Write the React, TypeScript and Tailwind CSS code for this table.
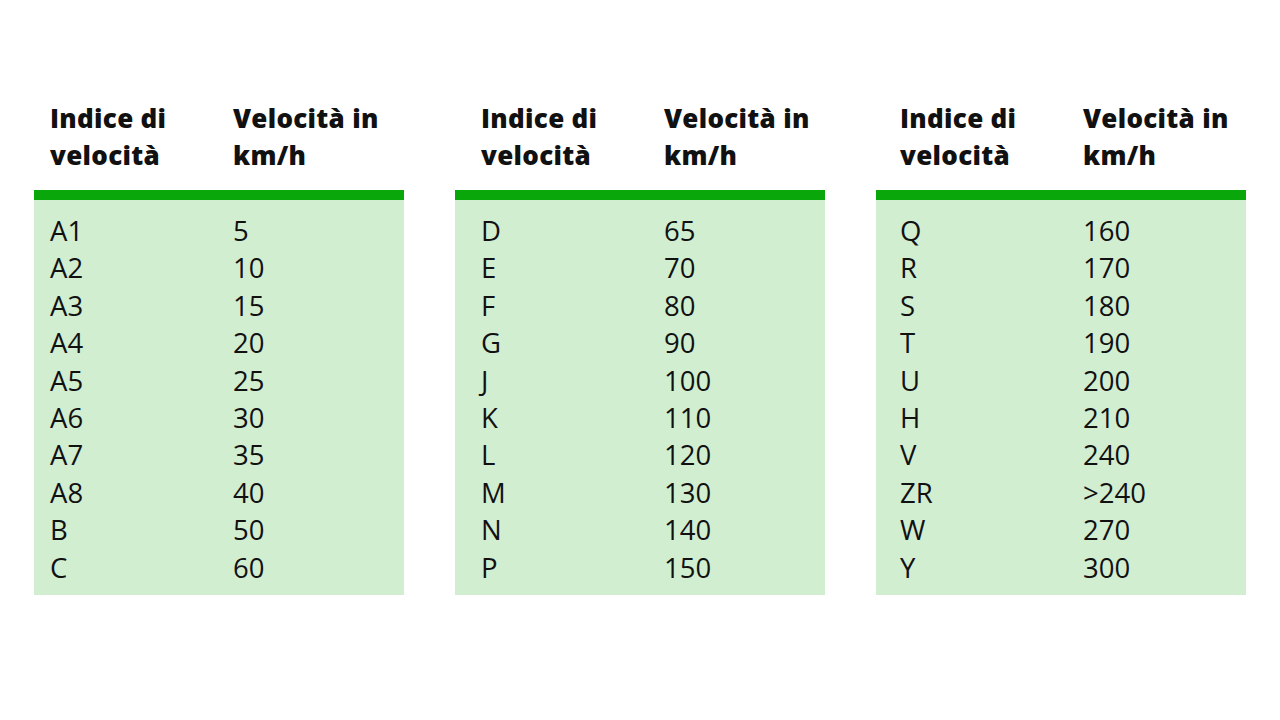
const tables = [
  {
    pad: "pl-[16px]",
    col: "w-[183px]",
    rows: [
      ["A1", "5"], ["A2", "10"], ["A3", "15"], ["A4", "20"], ["A5", "25"],
      ["A6", "30"], ["A7", "35"], ["A8", "40"], ["B", "50"], ["C", "60"],
    ],
  },
  {
    pad: "pl-[26px]",
    col: "w-[183px]",
    rows: [
      ["D", "65"], ["E", "70"], ["F", "80"], ["G", "90"], ["J", "100"],
      ["K", "110"], ["L", "120"], ["M", "130"], ["N", "140"], ["P", "150"],
    ],
  },
  {
    pad: "pl-[24px]",
    col: "w-[183px]",
    rows: [
      ["Q", "160"], ["R", "170"], ["S", "180"], ["T", "190"], ["U", "200"],
      ["H", "210"], ["V", "240"], ["ZR", ">240"], ["W", "270"], ["Y", "300"],
    ],
  },
];

function SpeedTable({ pad, col, rows }: { pad: string; col: string; rows: string[][] }) {
  return (
    <div className="w-[370px] flex flex-col">
      <div className={`flex ${pad} h-[90px] font-extrabold text-[26px] leading-[37px] tracking-[0.3px]`}>
        <div className={col}>
          Indice di
          <br />
          velocità
        </div>
        <div>
          Velocità in
          <br />
          km/h
        </div>
      </div>
      <div className="h-[10px] bg-[#0aa70a]" />
      <div className={`bg-[#d1eed1] ${pad} pt-[12px] pb-[9px] text-[27.5px] leading-[37.4px]`}>
        {rows.map(([idx, speed]) => (
          <div key={idx} className="flex">
            <div className={col}>{idx}</div>
            <div>{speed}</div>
          </div>
        ))}
      </div>
    </div>
  );
}

export default function App() {
  return (
    <div
      className="w-[1280px] h-[720px] bg-white text-[#111] pt-[100px] pl-[34px] flex gap-[51px]"
      style={{ fontFamily: '"Open Sans", "Noto Sans", sans-serif' }}
    >
      {tables.map((t, i) => (
        <SpeedTable key={i} {...t} />
      ))}
    </div>
  );
}
